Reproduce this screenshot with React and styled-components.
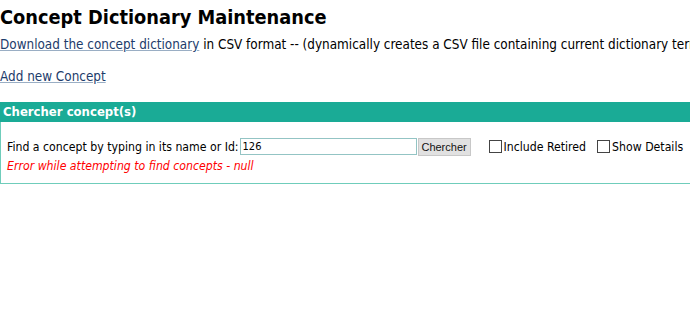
import React from "react";
import styled, { createGlobalStyle } from "styled-components";

const GlobalStyle = createGlobalStyle`
  html, body {
    margin: 0;
    padding: 0;
    background: #fff;
    overflow: hidden;
  }
  body {
    font-family: "DejaVu Sans Condensed", "DejaVu Sans", Verdana, sans-serif;
    font-size: 12.2px;
    color: #000;
  }
`;

const Page = styled.div`
  width: 760px;
  padding-top: 6px;
`;

const Title = styled.h2`
  margin: 0;
  font-size: 19.8px;
  font-weight: bold;
  line-height: 24px;
`;

const Line = styled.p`
  margin: ${(p) => p.$top || 0}px 0 0 0;
  font-size: 13.4px;
  line-height: 18px;
  white-space: nowrap;
`;

const Link = styled.a`
  color: #1d3c6b;
  text-decoration: underline;
  text-decoration-color: #9aaec4;
`;

const BoxHeader = styled.div`
  margin-top: 16px;
  background: #1aab96;
  color: #fff;
  font-weight: bold;
  font-size: 13px;
  line-height: 20px;
  padding-left: 3px;
`;

const Box = styled.div`
  border: 1px solid #6fcdbb;
  border-top: none;
  padding: 16px 6px 9px;
`;

const SearchRow = styled.div`
  display: flex;
  align-items: center;
  white-space: nowrap;
  height: 17px;
`;

const Input = styled.input`
  box-sizing: border-box;
  width: 177px;
  height: 17px;
  margin: 0 0 0 1px;
  padding: 0 2px;
  border: 1px solid #93c4c4;
  font-family: "DejaVu Sans Condensed", "DejaVu Sans", sans-serif;
  font-size: 11px;
  outline: none;
`;

const Button = styled.button`
  box-sizing: border-box;
  margin-left: 1px;
  width: 53px;
  height: 18px;
  padding: 0;
  background: #e1e1e1;
  border: 1px solid #c8c8c8;
  font-family: "Liberation Sans", Arial, sans-serif;
  font-size: 11px;
  color: #111;
`;

const Check = styled.label`
  display: flex;
  align-items: center;
  margin-left: ${(p) => p.$gap}px;
`;

const Tick = styled.span`
  box-sizing: border-box;
  width: 13px;
  height: 13px;
  border: 1px solid #444;
  margin-right: 2px;
`;

const Error = styled.div`
  margin-top: 3px;
  color: #f00;
  font-style: italic;
  line-height: 16px;
`;

export default function App() {
  return (
    <>
      <GlobalStyle />
      <Page>
        <Title>Concept Dictionary Maintenance</Title>
        <Line $top={6}>
          <Link href="#">Download the concept dictionary</Link> in CSV format -- (dynamically
          creates a CSV file containing current dictionary terms)
        </Line>
        <Line $top={14}>
          <Link href="#">Add new Concept</Link>
        </Line>
        <BoxHeader>Chercher concept(s)</BoxHeader>
        <Box>
          <SearchRow>
            Find a concept by typing in its name or Id:
            <Input defaultValue="126" />
            <Button>Chercher</Button>
            <Check $gap={18}>
              <Tick />
              Include Retired
            </Check>
            <Check $gap={11}>
              <Tick />
              Show Details
            </Check>
          </SearchRow>
          <Error>Error while attempting to find concepts - null</Error>
        </Box>
      </Page>
    </>
  );
}
